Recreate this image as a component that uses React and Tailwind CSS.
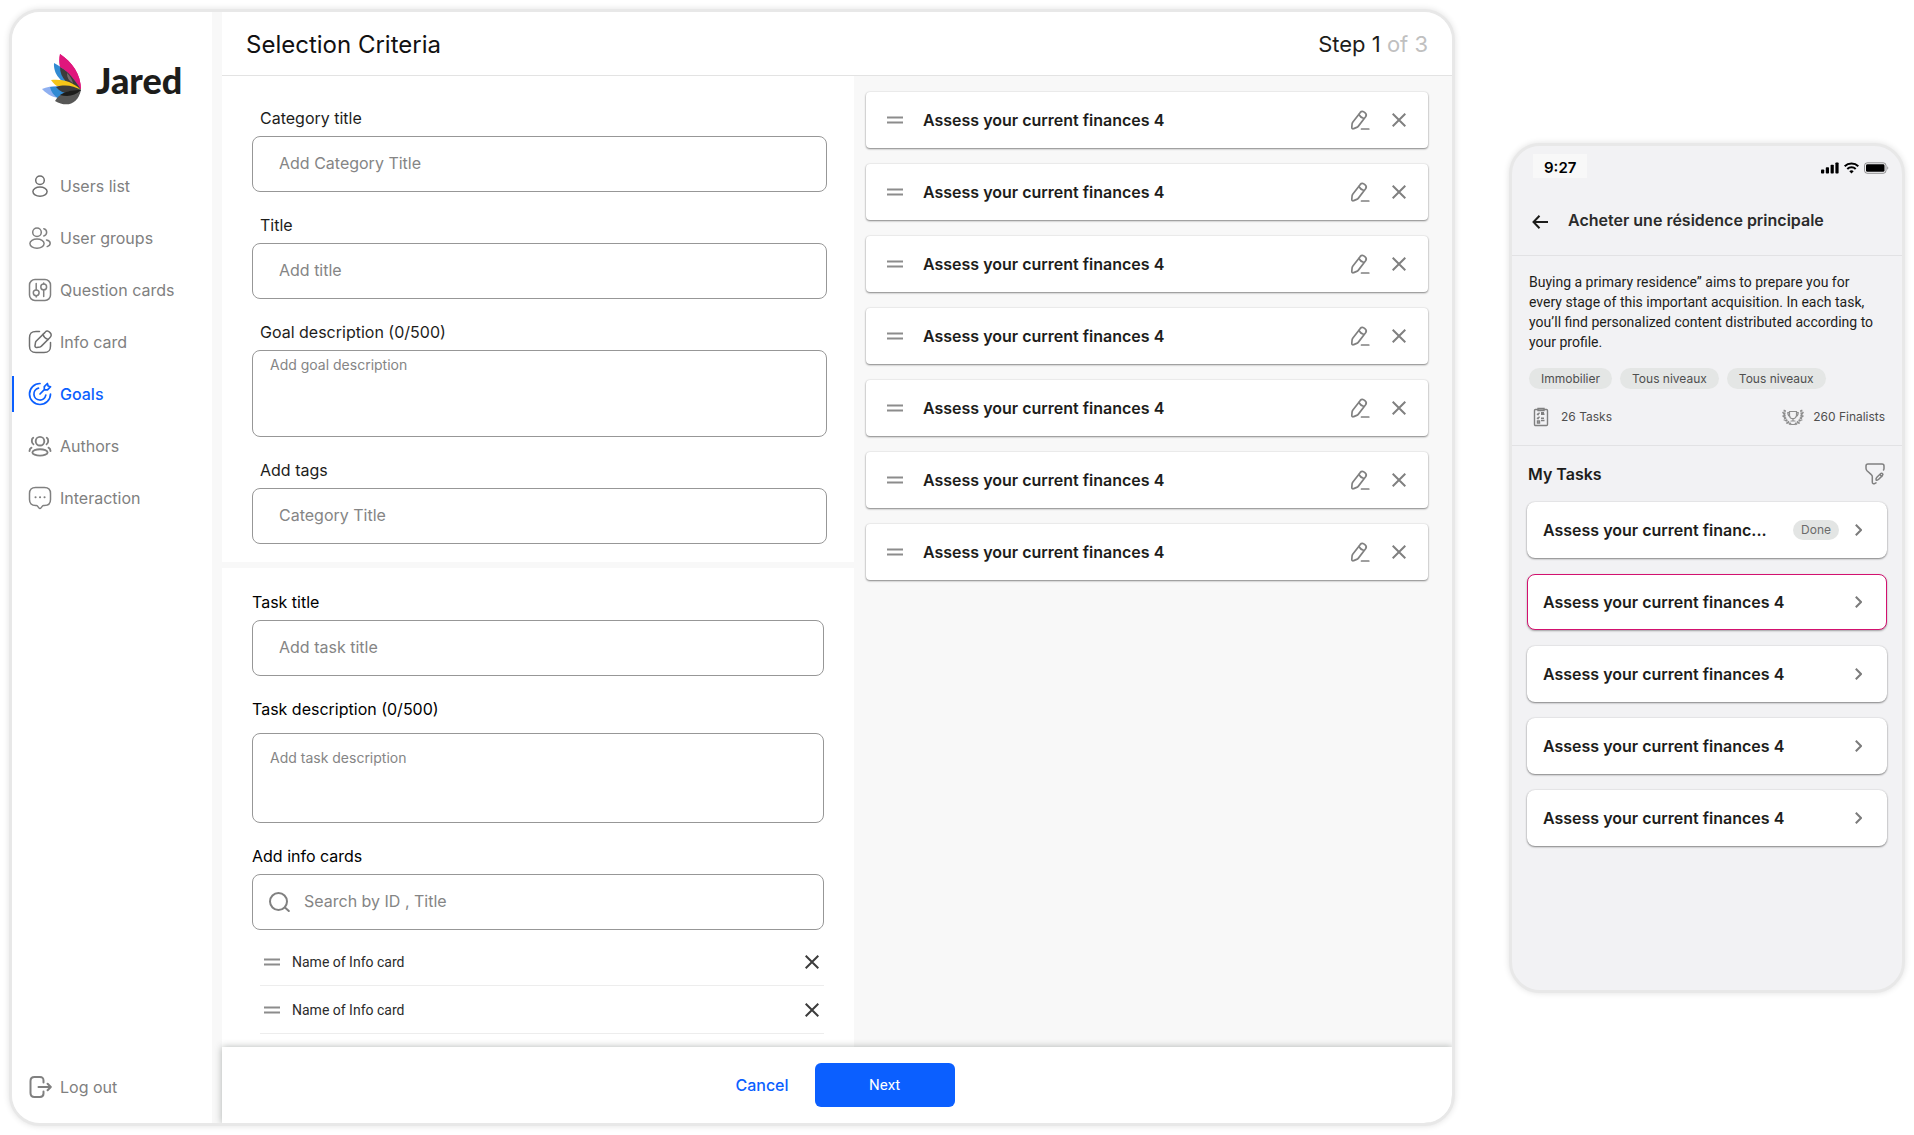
import React from "react";

const INTER = "font-['Inter','Liberation_Sans',sans-serif]";

function Svg({ size = 24, children, className = "", stroke = 1.5 }) {
  return (
    <svg
      width={size}
      height={size}
      viewBox="0 0 24 24"
      fill="none"
      stroke="currentColor"
      strokeWidth={stroke}
      strokeLinecap="round"
      strokeLinejoin="round"
      className={`shrink-0 ${className}`}
      aria-hidden="true"
    >
      {children}
    </svg>
  );
}

const UserIcon = () => (
  <Svg className="text-[#6f6f6f]">
    <circle cx="12" cy="6.2" r="4.3" />
    <ellipse cx="12" cy="17.6" rx="7.1" ry="4.6" />
  </Svg>
);

const UsersIcon = () => (
  <Svg>
    <circle cx="9" cy="6.2" r="4.3" />
    <path d="M15.8 9.9a3.7 3.7 0 0 0 0-7.2" />
    <ellipse cx="9" cy="17.6" rx="7.1" ry="4.6" />
    <path d="M18.5 14c2.3.5 3.7 1.700 3.700 3.300 0 1.500-1.200 2.700-3 3.300" />
  </Svg>
);

const SlidersIcon = () => (
  <Svg>
    <rect x="1.500" y="1.500" width="21" height="21" rx="5.500" />
    <path d="M8.200 5.500v6.200M15.700 18.500v-6.200M15.700 5v.8M8.200 18.900v-1" />
    <circle cx="8.200" cy="14.800" r="2.900" />
    <circle cx="15.700" cy="8.900" r="2.900" />
  </Svg>
);

const NoteIcon = () => (
  <Svg className="text-[#6f6f6f]">
    <path d="M11.500 1.500H8c-4.800 0-6.500 1.700-6.500 6.500v8c0 4.800 1.700 6.500 6.500 6.500h8c4.800 0 6.500-1.700 6.500-6.500v-3.500" />
    <path d="M16.800 2.600 8.300 11c-.4.400-.7 1-.8 1.500l-.5 3.100c-.2 1.200.6 2 1.700 1.800l3.200-.5c.5-.1 1.200-.4 1.500-.8l8.400-8.400c1.500-1.500 2.200-3.200 0-5.300-2.100-2.100-3.700-1.400-5 .2Z" />
    <path d="M14.900 4.400c.7 2.300 2.500 4.200 5 5" />
  </Svg>
);

const TargetIcon = () => (
  <Svg stroke={1.700}>
    <path d="M22.500 12A10.500 10.500 0 1 1 12 1.500" />
    <path d="M17.800 13.200A6 6 0 1 1 10.500 6.200" />
    <path d="m12 12 4.300-4.300M16.300 7.700V4.600l3.100-3.100.7 2.500 2.500.7-3.100 3.100h-3.200Z" />
  </Svg>
);

const GroupIcon = () => (
  <Svg stroke={1.900}>
    <circle cx="12" cy="7.200" r="4.300" />
    <path d="M5.200 3.800C3.300 5 3.300 9 5.400 10.200M18.800 3.800c1.900 1.200 1.900 5.200-.2 6.400" />
    <ellipse cx="12" cy="18.400" rx="7.600" ry="3.200" />
    <path d="M3.500 13.700c-1.300.7-2 1.900-2 3.400M20.500 13.700c1.300.7 2 1.900 2 3.400" />
  </Svg>
);

const ChatIcon = () => (
  <Svg>
    <path d="M7.500 1.500h9c3.800 0 6 2.200 6 6v6c0 3.800-2.200 6-6 6h-.9c-.5 0-.9.200-1.200.6l-1.400 1.800c-.6.800-1.500.8-2.100 0l-1.400-1.800c-.3-.4-.8-.6-1.200-.6h-.8c-3.800 0-6-2.200-6-6v-6c0-3.800 2.200-6 6-6Z" />
    <path d="M7.500 11.200h.1M12 11.200h.1M16.500 11.200h.1" strokeWidth="2" />
  </Svg>
);

const LogoutIcon = () => (
  <Svg stroke={2}>
    <path d="M15.500 7.500V5.400C15.500 3.200 14.300 2 12 2H6.500C3.800 2 2.500 3.300 2.500 6v12c0 2.700 1.300 4 4 4H12c2.300 0 3.500-1.200 3.500-3.400v-2.100" />
    <path d="M10.500 12h12M19.600 8.700l3.200 3.300-3.200 3.300" />
  </Svg>
);

function DragIcon() {
  return (
    <svg width="16" height="8" viewBox="0 0 16 8" className="shrink-0" aria-hidden="true">
      <path d="M0 1.500h16M0 6.500h16" stroke="#8c8c8c" strokeWidth="2" />
    </svg>
  );
}

function CloseIcon() {
  return (
    <svg width="14" height="14" viewBox="0 0 14 14" aria-hidden="true">
      <path d="M.7.7l12.600 12.600M13.300.7.7 13.300" stroke="currentColor" strokeWidth="2" fill="none" />
    </svg>
  );
}

function EditIcon() {
  return (
    <svg width="20" height="20" viewBox="0 0 20 20" fill="none" stroke="currentColor" strokeWidth="1.700" strokeLinecap="round" strokeLinejoin="round" aria-hidden="true">
      <path d="M10.300 2.400 2.900 11.900c-.4.500-.7 1.300-.8 1.900l-.3 3.400c-.1 1.300.8 1.900 1.900 1.400l3-1.200c.6-.2 1.300-.8 1.700-1.300l7.200-9.300c1-1.400 1-2.800-.7-4.200-1.800-1.500-3.400-1.700-4.600-.2Z" />
      <path d="M8.900 4.500c1 1.900 2.500 3.100 4.600 3.700M11.500 19h7.300" />
    </svg>
  );
}

function Logo() {
  return (
    <svg width="40" height="52" viewBox="0 0 40 52" className="shrink-0" aria-hidden="true">
      <path d="M18 0c12 8 21 20 21 36C25 29 15 16 18 0Z" fill="#e0167c" />
      <path d="M12 9c8 4 18 12 27 27C22 32 11 22 12 9Z" fill="#318ad2" />
      <path d="M18 13c9 5 15 13 21 23-13-4-21-12-21-23Z" fill="#3c3c3b" />
      <path d="M18 0c12 8 21 20 21 36-3-9-11-18-21-23-1-4-1-8 0-13Z" fill="#e0167c" />
      <path d="M25 19c3 3 5 6 6 10-4-2-6-5-6-10Z" fill="#77696f" />
      <path d="M9 26c11-1 21 1 30 10-14 2-24-1-30-10Z" fill="#f5c518" />
      <path d="M0 35c9-4 26-4 39 1-11 10-27 12-39-1Z" fill="#8fb0f0" />
      <path d="M8 33c12-1 22 0 31 3-9 7-15 9-22 9-5-3-8-7-9-12Z" fill="#318ad2" />
      <path d="M14 33c9-3 18-1 25 3-9 5-18 5-25-3Z" fill="#3c3c3b" />
      <path d="M13 47c4-7 12-11 26-11-3 14-14 18-26 11Z" fill="#575756" />
      <path d="M18 41c6-4 13-5 21-5-6 6-13 7-21 5Z" fill="#1d1d1b" />
    </svg>
  );
}

const NAV = [
  { label: "Users list", Icon: UserIcon },
  { label: "User groups", Icon: UsersIcon },
  { label: "Question cards", Icon: SlidersIcon },
  { label: "Info card", Icon: NoteIcon },
  { label: "Goals", Icon: TargetIcon, active: true },
  { label: "Authors", Icon: GroupIcon },
  { label: "Interaction", Icon: ChatIcon },
];

function Sidebar() {
  return (
    <aside className="flex w-[200px] shrink-0 flex-col bg-white">
      <div className="flex items-center gap-[14px] pt-[42px] pl-[30px]">
        <Logo />
        <span className="font-['Lato',sans-serif] text-[36px] leading-[48px] font-black text-[#1d1d1b]">Jared</span>
      </div>
      <nav className="mt-[62px] flex flex-col gap-4">
        {NAV.map(({ label, Icon, active }) => (
          <a
            key={label}
            href="#"
            className={
              active
                ? "flex h-9 items-center gap-2 border-l-2 border-[#0b5fff] pl-[14px] text-base font-medium text-[#0b5fff]"
                : "flex h-9 items-center gap-2 border-l-2 border-transparent pl-[14px] text-base text-[#808080]"
            }
          >
            <Icon />
            {label}
          </a>
        ))}
      </nav>
      <a href="#" className="mt-auto mb-[18px] flex h-9 items-center gap-2 pl-4 text-base text-[#808080]">
        <LogoutIcon />
        Log out
      </a>
    </aside>
  );
}

const BOX = "block w-full rounded-lg border border-[#979797] bg-white text-[#1d1d1b] placeholder:text-[#858585] outline-none";

function Field({ id, label, placeholder, inset }) {
  return (
    <div>
      <label htmlFor={id} className={inset ? "mb-[6px] block pl-2 text-base text-[#1d1d1b]" : "mb-[6px] block text-base text-black"}>
        {label}
      </label>
      <input id={id} type="text" placeholder={placeholder} className={`${BOX} h-14 px-[26px] pb-[2px] text-base`} />
    </div>
  );
}

function GoalForm() {
  return (
    <section className="flex flex-col gap-[21px] bg-white pt-[30px] pr-[27px] pb-[18px] pl-[30px]">
      <Field id="cat" label="Category title" placeholder="Add Category Title" inset />
      <Field id="title" label="Title" placeholder="Add title" inset />
      <div>
        <label htmlFor="goal" className="mb-[6px] block pl-2 text-base text-[#1d1d1b]">Goal description (0/500)</label>
        <textarea id="goal" placeholder="Add goal description" className={`${BOX} h-[87px] resize-none px-[17px] pt-1 text-sm`} />
      </div>
      <Field id="tags" label="Add tags" placeholder="Category Title" inset />
    </section>
  );
}

function TaskForm() {
  return (
    <section className="flex flex-1 flex-col gap-[21px] bg-white pt-[22px] pr-[30px] pb-[13px] pl-[30px]">
      <Field id="task" label="Task title" placeholder="Add task title" />
      <div>
        <label htmlFor="taskdesc" className="mb-3 block text-base text-black">Task description (0/500)</label>
        <textarea id="taskdesc" placeholder="Add task description" className={`${BOX} h-[90px] resize-none px-[17px] pt-[14px] text-sm`} />
      </div>
      <div>
        <label htmlFor="search" className="mb-[6px] block text-base text-black">Add info cards</label>
        <div className="flex h-14 items-center gap-[14px] rounded-lg border border-[#979797] pr-4 pl-4">
          <svg width="21" height="20" viewBox="0 0 21 20" fill="none" stroke="#808080" strokeWidth="2" strokeLinecap="round" className="shrink-0" aria-hidden="true">
            <circle cx="9.500" cy="9.500" r="8.500" />
            <path d="m16.500 16 3.300 3" />
          </svg>
          <input id="search" type="text" placeholder="Search by ID , Title" className="min-w-0 flex-1 bg-transparent pb-[2px] text-base outline-none placeholder:text-[#858585]" />
        </div>
        <ul className="mt-2 pl-2">
          {[1, 2].map((n) => (
            <li key={n} className="flex h-12 items-center border-b border-[#ededed] pr-[5px] pl-1">
              <DragIcon />
              <span className="ml-3 flex-1 font-['Roboto',sans-serif] text-sm text-[#2b2b2b]">Name of Info card</span>
              <button type="button" aria-label="Remove info card" className="text-[#3c3c3c]">
                <CloseIcon />
              </button>
            </li>
          ))}
        </ul>
      </div>
    </section>
  );
}

function Criteria() {
  return (
    <ul className="flex flex-col gap-4 pt-4 pr-6 pl-3">
      {[1, 2, 3, 4, 5, 6, 7].map((n) => (
        <li key={n} className="flex h-14 items-center rounded bg-white pr-[22px] pl-[21px] shadow-[0_1px_2px_rgba(0,0,0,0.45),0_0_2px_rgba(0,0,0,0.12)]">
          <DragIcon />
          <span className="ml-5 flex-1 text-base font-semibold text-[#1d1d1b]">Assess your current finances 4</span>
          <button type="button" aria-label="Edit criterion" className="mr-[22px] text-[#808080]">
            <EditIcon />
          </button>
          <button type="button" aria-label="Remove criterion" className="text-[#808080]">
            <CloseIcon />
          </button>
        </li>
      ))}
    </ul>
  );
}

function Desktop() {
  return (
    <div className="flex min-w-0 flex-1 overflow-hidden rounded-[31px] border-[3px] border-[#e8e8e8] bg-[#f8f8f8] shadow-[0_0_6px_rgba(0,0,0,0.12)]">
      <Sidebar />
      <main className="ml-[10px] flex min-w-0 flex-1 flex-col">
        <header className="flex h-16 items-center justify-between border-b border-[#e3e3e3] bg-white pt-[2px] pr-6 pl-6">
          <h1 className="text-2xl text-[#111]">Selection Criteria</h1>
          <p className="text-[22px] text-[#1d1d1b]">
            Step 1 <span className="text-[#c0c0c0]">of 3</span>
          </p>
        </header>
        <div className="grid flex-1 grid-cols-[minmax(0,632fr)_minmax(0,598fr)]">
          <div className="flex flex-col gap-[6px]">
            <GoalForm />
            <TaskForm />
          </div>
          <Criteria />
        </div>
        <footer className="relative flex h-[76px] items-center justify-center gap-[10px] bg-white shadow-[0_0_7px_rgba(60,70,65,0.4)]">
          <button type="button" className="px-4 text-base font-medium text-[#0b5fff]">Cancel</button>
          <button type="button" className="h-11 w-[140px] rounded-md bg-[#0b5fff] font-['Roboto',sans-serif] text-[15px] text-white">Next</button>
        </footer>
      </main>
    </div>
  );
}

function StatusIcons() {
  return (
    <svg width="68" height="12" viewBox="0 0 68 12" className="mt-1" aria-label="Signal, Wi-Fi and battery">
      <g fill="#000">
        <rect x="0" y="7.500" width="3.200" height="4" rx=".8" />
        <rect x="4.800" y="5.300" width="3.200" height="6.200" rx=".8" />
        <rect x="9.600" y="2.800" width="3.200" height="8.700" rx=".8" />
        <rect x="14.400" y=".5" width="3.200" height="11" rx=".8" />
      </g>
      <g fill="none" stroke="#000" strokeWidth="2">
        <path d="M23.700 4.300a9.700 9.700 0 0 1 13.600 0" />
        <path d="M26.300 7a6 6 0 0 1 8.400 0" />
      </g>
      <path d="M28.300 9.200a3.200 3.200 0 0 1 4.400 0L30.500 11.500Z" fill="#000" />
      <rect x="43.500" y=".8" width="21.500" height="10.500" rx="2.800" fill="none" stroke="#000" strokeOpacity=".4" />
      <rect x="45" y="2.300" width="18.500" height="7.500" rx="1.400" fill="#000" />
      <path d="M66.300 4.300v3.500c1.300-.5 1.300-3 0-3.500Z" fill="#000" fillOpacity=".4" />
    </svg>
  );
}

function TaskCard({ text, done, selected }) {
  return (
    <li>
      <a
        href="#"
        className={
          selected
            ? "flex h-14 items-center rounded-lg border border-[#d3116f] bg-white pr-6 pl-[15px] shadow-[0_1px_2px_rgba(0,0,0,0.35)]"
            : "flex h-14 items-center rounded-lg border border-transparent bg-white pr-6 pl-[15px] shadow-[0_1px_2px_rgba(0,0,0,0.45),0_0_2px_rgba(0,0,0,0.12)]"
        }
      >
        <span className="min-w-0 flex-1 text-base font-semibold whitespace-nowrap text-[#1d1d1b]">{text}</span>
        {done && <span className="mr-4 rounded-full bg-[#e3e5e4] px-2 text-xs leading-5 text-[#6b6b6b]">Done</span>}
        <svg width="7" height="12" viewBox="0 0 7 12" fill="none" stroke="#7b7b7b" strokeWidth="2" className="shrink-0" aria-hidden="true">
          <path d="M.8.8 6 6 .8 11.200" />
        </svg>
      </a>
    </li>
  );
}

function Phone() {
  return (
    <div className="flex min-h-[850px] w-[396px] shrink-0 flex-col overflow-hidden rounded-[31px] border-[3px] border-[#e8e8e8] bg-[#f2f2f4] shadow-[0_0_6px_rgba(0,0,0,0.12)]">
      <div className="flex items-center justify-between pt-2 pr-[13px] pl-[21px]">
        <span className="bg-[#f8f8f8] px-[11px] pt-1 text-[15px] leading-5 font-semibold text-black">9:27</span>
        <StatusIcons />
      </div>
      <header className="flex h-[78px] items-center gap-5 border-b border-[#e2e2e4] pt-2 pl-5">
        <button type="button" aria-label="Back" className="mt-1 text-[#1d1d1b]">
          <svg width="16" height="14" viewBox="0 0 16 14" fill="none" stroke="currentColor" strokeWidth="2" aria-hidden="true">
            <path d="M16 7H1.500M7.500.7 1.500 7l6 6.300" />
          </svg>
        </button>
        <h2 className="text-base font-semibold text-[#2b2b2b]">Acheter une résidence principale</h2>
      </header>
      <section className="border-b border-[#e2e2e4] px-[17px] pt-4 pb-4">
        <p className="font-['Roboto',sans-serif] text-sm leading-5 whitespace-nowrap text-[#1d1d1b]">
          Buying a primary residence” aims to prepare you for
          <br />
          every stage of this important acquisition. In each task,
          <br />
          you’ll find personalized content distributed according to
          <br />
          your profile.
        </p>
        <div className="mt-4 flex gap-2 text-xs leading-[21px] text-[#4f4f4f]">
          <span className="rounded-full bg-[#e4e6e5] px-3">Immobilier</span>
          <span className="rounded-full bg-[#e4e6e5] px-3">Tous niveaux</span>
          <span className="rounded-full bg-[#e4e6e5] px-3">Tous niveaux</span>
        </div>
        <div className="mt-4 flex items-center justify-between text-xs leading-6 text-[#4f4f4f]">
          <span className="flex items-center gap-3 pl-1">
            <svg width="16" height="20" viewBox="0 0 16 20" fill="none" stroke="#808080" strokeWidth="1.400" aria-hidden="true">
              <rect x="1.500" y="2.500" width="13" height="16" rx="1" />
              <path d="M5 3.500v-2h6v2Z" fill="#b5b5b5" />
              <path d="m4 6.700 1 1 1.500-2M8 7.200h3.500M8 5.700h3M4 10.700l1 1 1.500-2M8 11.200h3M4.500 14h2v2h-2ZM8 13.500h3.500" />
            </svg>
            26 Tasks
          </span>
          <span className="flex items-center gap-[9px]">
            <svg width="22" height="18" viewBox="0 0 22 18" fill="none" stroke="#8e8e8e" strokeWidth="1.200" strokeLinecap="round" aria-hidden="true">
              <path d="M7.500 3.500h7v3.700a3.500 3.500 0 0 1-7 0ZM7.500 4.500H5.800c0 2.500.8 3.500 2.200 3.800M14.500 4.500h1.700c0 2.500-.8 3.500-2.200 3.800M11 10.700v2M9 13h4" />
              <path d="M3 2C1.500 6 2 12.500 9 16.300M19 2c1.500 4 1 10.500-6 14.300" strokeDasharray="1.800 .7" strokeWidth="2.400" strokeLinecap="butt" />
              <path d="M.8 4.500 2.500 6.500M.8 8l2 1.500M2 12l2.300.5M4.500 15.200l2.300-.5M21.200 4.500l-1.700 2M21.200 8l-2 1.500M20 12l-2.300.5M17.500 15.200l-2.300-.5M9 16.500h4" />
            </svg>
            260 Finalists
          </span>
        </div>
      </section>
      <section className="pr-[15px] pl-[15px]">
        <div className="flex h-14 items-center justify-between pr-[2px] pl-px">
          <h3 className="text-base font-semibold text-[#1d1d1b]">My Tasks</h3>
          <button type="button" aria-label="Filter tasks" className="text-[#808080]">
            <svg width="20" height="22" viewBox="0 0 20 22" fill="none" stroke="currentColor" strokeWidth="1.500" strokeLinecap="round" strokeLinejoin="round" aria-hidden="true">
              <path d="M18.500 7c.3-.4.500-1 .5-1.600V3c0-1.200-.8-2-2-2H3C1.800 1 1 1.800 1 3v2.300c0 .8.500 1.900 1 2.400l4.300 3.900c.6.500 1 1.500 1 2.200v5.100c0 1.800 1.300 2.400 2.700 1.500l1-.6" />
              <path d="m15.500 10.700-3.600 3.600c-.5.500-1 2-.8 2.700.7.300 2-.1 2.600-.7l3.700-3.700c.7-.8.700-1.400.1-2-.6-.6-1.300-.6-2 .1ZM14.800 11.500l2 2" />
            </svg>
          </button>
        </div>
        <ul className="flex flex-col gap-4">
          <TaskCard text="Assess your current financ..." done />
          <TaskCard text="Assess your current finances 4" selected />
          <TaskCard text="Assess your current finances 4" />
          <TaskCard text="Assess your current finances 4" />
          <TaskCard text="Assess your current finances 4" />
        </ul>
      </section>
    </div>
  );
}

export default function App() {
  return (
    <div className={`flex items-center gap-[54px] bg-white p-[9px] ${INTER}`}>
      <Desktop />
      <Phone />
    </div>
  );
}
